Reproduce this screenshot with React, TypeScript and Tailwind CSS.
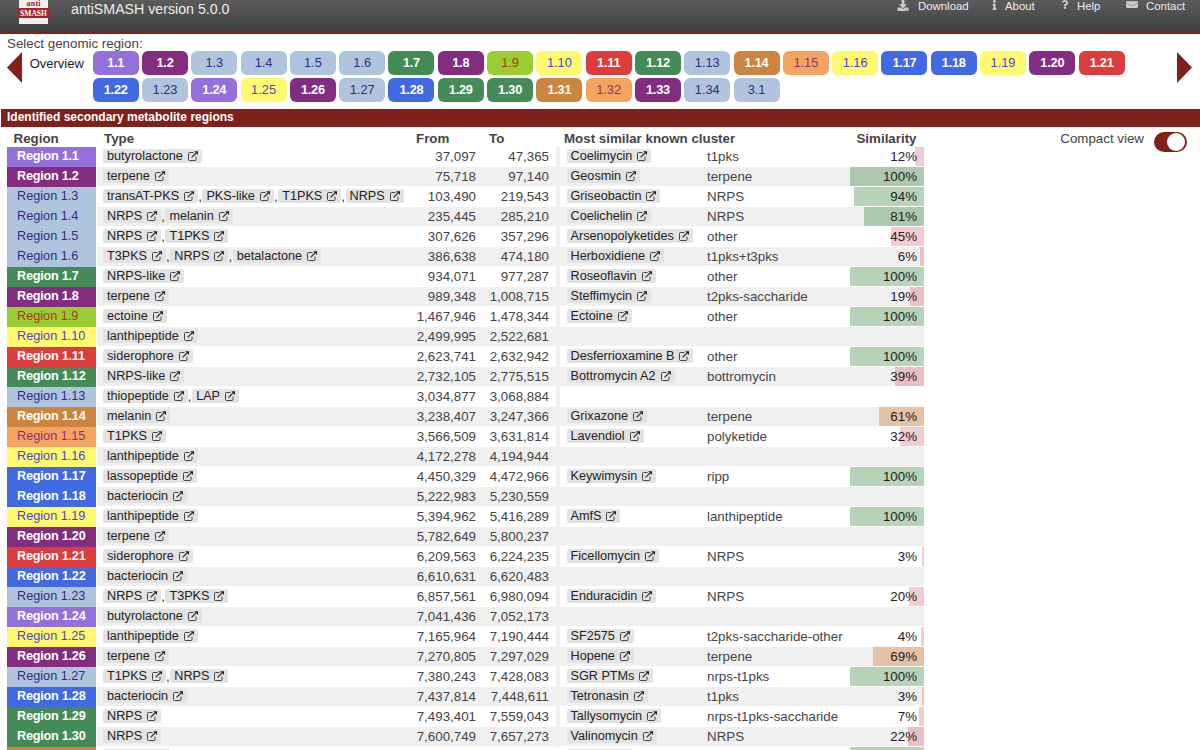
import { FaDownload, FaInfo, FaQuestion, FaEnvelope } from 'react-icons/fa'

const colors: Record<string, string> = {
  purple: 'bg-[#9370db] text-white font-bold tracking-[-0.25px]',
  terpene: 'bg-[#822d80] text-white font-bold tracking-[-0.25px]',
  hybrid: 'bg-[#b0c4de] text-[#2c2e86]',
  green: 'bg-[#448b57] text-white font-bold tracking-[-0.25px]',
  ectoine: 'bg-[#9acd32] text-[#b0331f]',
  yellow: 'bg-[#fff970] text-[#4a45cf]',
  red: 'bg-[#de3c3c] text-white font-bold tracking-[-0.25px]',
  brown: 'bg-[#cc853f] text-white font-bold tracking-[-0.25px]',
  orange: 'bg-[#f4a460] text-[#8b3374]',
  blue: 'bg-[#4169e1] text-white font-bold tracking-[-0.25px]',
}

type Region = {
  id: string
  color: string
  types: string[]
  from: string
  to: string
  cluster?: string
  kind?: string
  similarity?: number
}

const r = (
  id: string,
  color: string,
  types: string,
  from: string,
  to: string,
  cluster?: string,
  kind?: string,
  similarity?: number,
): Region => ({ id, color, types: types.split(','), from, to, cluster, kind, similarity })

const regions: Region[] = [
  r('1.1', 'purple', 'butyrolactone', '37,097', '47,365', 'Coelimycin', 't1pks', 12),
  r('1.2', 'terpene', 'terpene', '75,718', '97,140', 'Geosmin', 'terpene', 100),
  r('1.3', 'hybrid', 'transAT-PKS,PKS-like,T1PKS,NRPS', '103,490', '219,543', 'Griseobactin', 'NRPS', 94),
  r('1.4', 'hybrid', 'NRPS,melanin', '235,445', '285,210', 'Coelichelin', 'NRPS', 81),
  r('1.5', 'hybrid', 'NRPS,T1PKS', '307,626', '357,296', 'Arsenopolyketides', 'other', 45),
  r('1.6', 'hybrid', 'T3PKS,NRPS,betalactone', '386,638', '474,180', 'Herboxidiene', 't1pks+t3pks', 6),
  r('1.7', 'green', 'NRPS-like', '934,071', '977,287', 'Roseoflavin', 'other', 100),
  r('1.8', 'terpene', 'terpene', '989,348', '1,008,715', 'Steffimycin', 't2pks-saccharide', 19),
  r('1.9', 'ectoine', 'ectoine', '1,467,946', '1,478,344', 'Ectoine', 'other', 100),
  r('1.10', 'yellow', 'lanthipeptide', '2,499,995', '2,522,681'),
  r('1.11', 'red', 'siderophore', '2,623,741', '2,632,942', 'Desferrioxamine B', 'other', 100),
  r('1.12', 'green', 'NRPS-like', '2,732,105', '2,775,515', 'Bottromycin A2', 'bottromycin', 39),
  r('1.13', 'hybrid', 'thiopeptide,LAP', '3,034,877', '3,068,884'),
  r('1.14', 'brown', 'melanin', '3,238,407', '3,247,366', 'Grixazone', 'terpene', 61),
  r('1.15', 'orange', 'T1PKS', '3,566,509', '3,631,814', 'Lavendiol', 'polyketide', 32),
  r('1.16', 'yellow', 'lanthipeptide', '4,172,278', '4,194,944'),
  r('1.17', 'blue', 'lassopeptide', '4,450,329', '4,472,966', 'Keywimysin', 'ripp', 100),
  r('1.18', 'blue', 'bacteriocin', '5,222,983', '5,230,559'),
  r('1.19', 'yellow', 'lanthipeptide', '5,394,962', '5,416,289', 'AmfS', 'lanthipeptide', 100),
  r('1.20', 'terpene', 'terpene', '5,782,649', '5,800,237'),
  r('1.21', 'red', 'siderophore', '6,209,563', '6,224,235', 'Ficellomycin', 'NRPS', 3),
  r('1.22', 'blue', 'bacteriocin', '6,610,631', '6,620,483'),
  r('1.23', 'hybrid', 'NRPS,T3PKS', '6,857,561', '6,980,094', 'Enduracidin', 'NRPS', 20),
  r('1.24', 'purple', 'butyrolactone', '7,041,436', '7,052,173'),
  r('1.25', 'yellow', 'lanthipeptide', '7,165,964', '7,190,444', 'SF2575', 't2pks-saccharide-other', 4),
  r('1.26', 'terpene', 'terpene', '7,270,805', '7,297,029', 'Hopene', 'terpene', 69),
  r('1.27', 'hybrid', 'T1PKS,NRPS', '7,380,243', '7,428,083', 'SGR PTMs', 'nrps-t1pks', 100),
  r('1.28', 'blue', 'bacteriocin', '7,437,814', '7,448,611', 'Tetronasin', 't1pks', 3),
  r('1.29', 'green', 'NRPS', '7,493,401', '7,559,043', 'Tallysomycin', 'nrps-t1pks-saccharide', 7),
  r('1.30', 'green', 'NRPS', '7,600,749', '7,657,273', 'Valinomycin', 'NRPS', 22),
]

const tabs = [
  ...regions.map(({ id, color }) => ({ id, color })),
  { id: '1.31', color: 'brown' },
  { id: '1.32', color: 'orange' },
  { id: '1.33', color: 'terpene' },
  { id: '1.34', color: 'hybrid' },
  { id: '3.1', color: 'hybrid' },
]

function ExternalIcon() {
  return (
    <svg viewBox="0 0 10 10" className="ml-[5px] size-[10px] shrink-0" fill="none" stroke="#333">
      <path d="M5.5 1.5h-4a1 1 0 0 0-1 1v6a1 1 0 0 0 1 1h5.5a1 1 0 0 0 1-1V5.7" strokeWidth="0.9" />
      <path d="M3.6 6.4L8 2" strokeWidth="1.3" />
      <path d="M6.2 0.3H10v3.8z" fill="#222" stroke="none" />
    </svg>
  )
}

function LinkBox({ name }: { name: string }) {
  return (
    <a className="flex h-[14px] shrink-0 items-center rounded-[2px] bg-[#e3e3e3] px-[4px] text-[12.65px] whitespace-nowrap text-[#222]">
      {name}
      <ExternalIcon />
    </a>
  )
}

function Similarity({ value }: { value: number }) {
  const color =
    value > 75 ? 'bg-[rgba(0,100,0,0.28)]' : value > 50 ? 'bg-[rgba(210,105,30,0.35)]' : 'bg-[rgba(205,20,40,0.22)]'
  return (
    <div className="flex h-full w-[74px] justify-end">
      <div className={`flex h-full justify-end ${color}`} style={{ width: `${value}%` }}>
        <span className="pr-[7px] text-[#222]">{value}%</span>
      </div>
    </div>
  )
}

function RegionRow({ region, odd }: { region: Region; odd: boolean }) {
  return (
    <div className="flex h-5 items-stretch leading-[19px]">
      <div className={`w-[89px] pl-[10px] text-[12.7px] ${colors[region.color]}`}>Region {region.id}</div>
      <div className={`ml-[1px] flex h-[19.5px] w-[827px] ${odd ? 'bg-[#f0f0f0]' : ''}`}>
        <div className="flex w-[310px] shrink-0 items-center pl-[6px]">
          {region.types.map((type, i) => (
            <div key={type} className="flex shrink-0 items-center">
              {i > 0 && <span className="w-[4.3px] text-[#333]">,</span>}
              <LinkBox name={type} />
            </div>
          ))}
        </div>
        <div className="w-[69px] text-right">{region.from}</div>
        <div className="w-[73px] text-right">{region.to}</div>
        <div className="ml-[7px] h-5 w-[4px] bg-[#f0f0f0]" />
        <div className="flex w-[147px] items-center pl-[6.5px]">{region.cluster && <LinkBox name={region.cluster} />}</div>
        <div className="w-[143px]">{region.kind}</div>
        {region.similarity !== undefined && <Similarity value={region.similarity} />}
      </div>
    </div>
  )
}

export default function App() {
  return (
    <div className="h-[750px] w-[1200px] overflow-hidden bg-white font-['Liberation_Sans',Arial,sans-serif] text-[13.33px] text-[#444]">
      <header className="flex h-[34px] justify-between border-b-[3px] border-[#80201b] bg-linear-to-b from-[#5b5b5b] to-[#414141] text-[#eee]">
        <div className="flex">
          <svg viewBox="0 0 33 25" className="ml-[17px] h-[25px] w-[33px]">
            <rect x="2" width="29" height="24" fill="#eee" />
            <rect y="8" width="33" height="10" fill="#a8232a" />
            <text x="16.5" y="6" textAnchor="middle" fontFamily="Liberation Serif, serif" fontWeight="bold" fontSize="8" textLength="14" fill="#a8232a">anti</text>
            <text x="16.5" y="15.8" textAnchor="middle" fontFamily="Liberation Serif, serif" fontWeight="bold" fontSize="8" textLength="27" lengthAdjust="spacingAndGlyphs" fill="#fff">SMASH</text>
          </svg>
          <h1 className="ml-[21px] text-[14.2px] leading-[18px]">antiSMASH version 5.0.0</h1>
        </div>
        <nav className="flex w-[303px] text-[11.4px] leading-[12px]">
          <a className="flex w-[94px]"><FaDownload className="mr-[9px] h-[11px] w-[12px] text-[#ccc]" />Download</a>
          <a className="flex w-[70px]"><FaInfo className="mr-[7px] h-[10px] w-[7px] text-[#ccc]" />About</a>
          <a className="flex w-[65px]"><FaQuestion className="mr-[8px] h-[9px] w-[8px] text-[#ccc]" />Help</a>
          <a className="flex"><FaEnvelope className="mr-[8px] h-[9px] w-[12px] text-[#ccc]" preserveAspectRatio="none" />Contact</a>
        </nav>
      </header>

      <div className="h-[75px] pt-[2px]">
        <div className="h-[15px] pl-[7px] leading-[16px]">Select genomic region:</div>
        <div className="flex">
          <svg viewBox="0 0 15 31" className="mt-[1px] ml-[7px] h-[31px] w-[15px]">
            <path d="M15 0v31L0 15.5z" fill="#80201b" />
          </svg>
          <div className="ml-[7.7px] w-[63px] text-[13px] leading-[25px] text-[#222]">Overview</div>
          <div className="mr-[34.6px] flex w-[1050px] flex-wrap gap-x-[3.3px] gap-y-[3.5px] pr-[12px] text-[12.8px]">
            {tabs.map((tab) => (
              <div key={tab.id} className={`h-[23.5px] w-[46px] rounded-[6px] text-center leading-[24px] ${colors[tab.color]}`}>
                {tab.id}
              </div>
            ))}
          </div>
          <svg viewBox="0 0 15 31" className="mt-[1px] h-[31px] w-[15px]">
            <path d="M0 0v31l15-15.5z" fill="#80201b" />
          </svg>
        </div>
      </div>

      <h2 className="ml-[1px] h-[18px] bg-[#80201b] pl-[6px] text-[12px] leading-[17px] font-bold text-white">
        Identified secondary metabolite regions
      </h2>

      <div className="flex justify-between">
        <div className="pl-[7px]">
          <div className="flex h-[19.6px] leading-[24px] font-bold">
            <div className="w-[90px] pl-[6.5px]">Region</div>
            <div className="w-[312px] pl-[7px]">Type</div>
            <div className="w-[73px] pl-[7px]">From</div>
            <div className="w-[75px] pl-[7px]">To</div>
            <div className="w-[285px] pl-[7px]">Most similar known cluster</div>
            <div className="w-[82px] pr-[7.5px] text-right">Similarity</div>
          </div>
          {regions.map((region, i) => (
            <RegionRow key={region.id} region={region} odd={i % 2 === 1} />
          ))}
          <div className="flex h-5">
            <div className="w-[89px] bg-[#cc853f]" />
            <div className="flex w-[754px] pt-[2px] pl-[7px]">
              <div className="h-[14px] w-[67px] rounded-[2px] bg-[#e3e3e3]" />
              <div className="ml-[397px] h-[14px] w-[66px] rounded-[2px] bg-[#e3e3e3]" />
            </div>
            <div className="w-[74px] bg-[rgba(0,100,0,0.28)]" />
          </div>
        </div>
        <div className="flex h-[32px] items-start pr-[13px]">
          <span className="pt-[3px] pr-[10px] leading-[17px]">Compact view</span>
          <div className="mt-[5px] flex h-[20px] w-[33px] items-center justify-end rounded-full bg-[#80201b] pr-[2px]">
            <div className="size-[18px] rounded-full bg-white" />
          </div>
        </div>
      </div>
    </div>
  )
}
